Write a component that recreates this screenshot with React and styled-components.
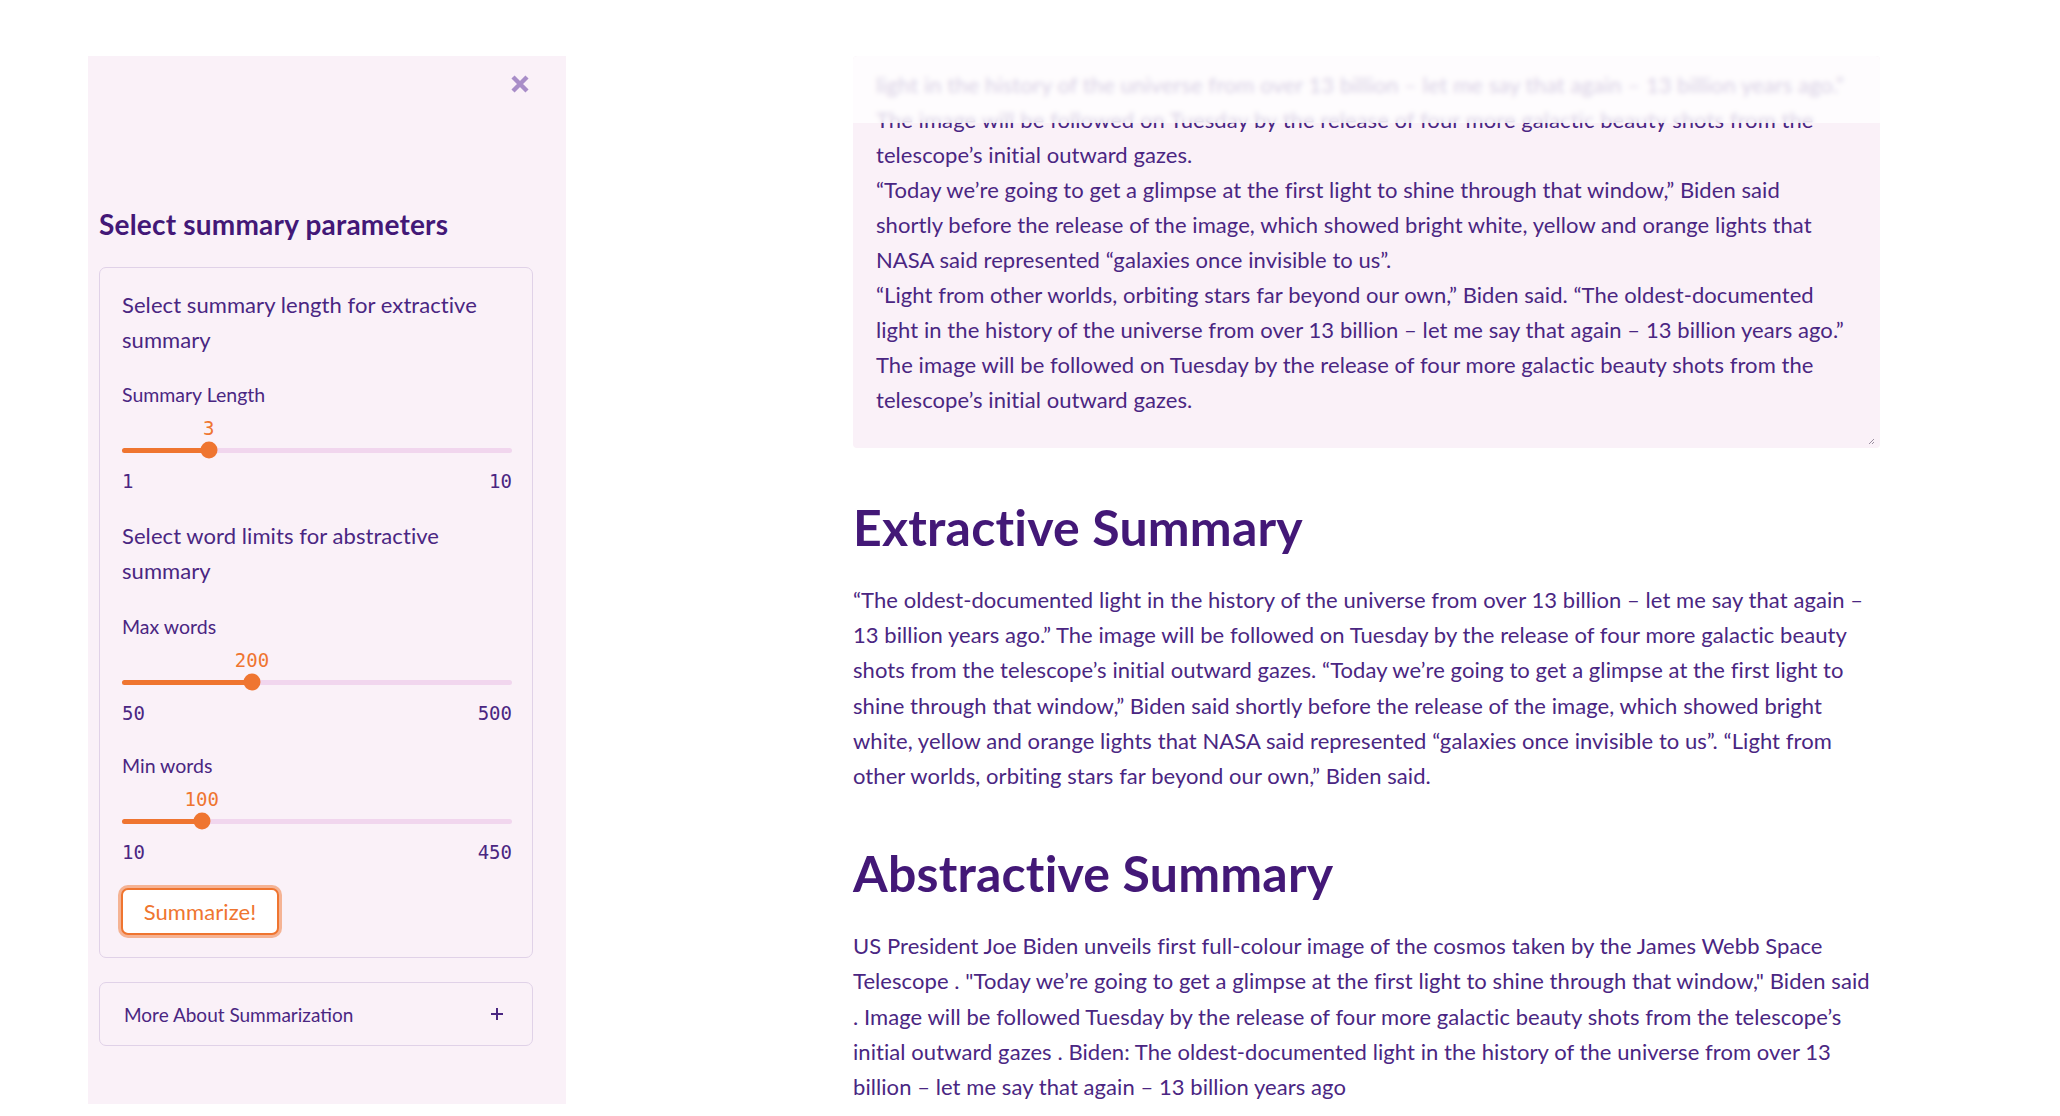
import React from "react";
import styled, { createGlobalStyle } from "styled-components";

const Global = createGlobalStyle`
  html, body { margin: 0; padding: 0; background: #ffffff; }
  body { font-family: Lato, "Noto Sans", sans-serif; }
  * { box-sizing: border-box; }
`;

const PURPLE = "#4a2682";
const HEAD = "#431877";
const ORANGE = "#ef7530";

const Page = styled.div`
  display: flex;
  align-items: flex-start;
  width: 2060px;
  min-height: 1116px;
  padding: 56px 0 0 88px;
`;

const Sidebar = styled.aside`
  width: 478px;
  height: 1048px;
  flex-shrink: 0;
  background: #faf1f8;
  padding: 0 33px 0 11px;
  display: flex;
  flex-direction: column;
`;

const SideHeader = styled.div`
  height: 56px;
  display: flex;
  align-items: center;
  justify-content: flex-end;
  padding-right: 2px;
`;

const CloseButton = styled.button`
  border: none;
  background: transparent;
  padding: 0;
  width: 22px;
  height: 22px;
  display: flex;
  align-items: center;
  justify-content: center;
  cursor: pointer;
`;

const SideTitle = styled.h3`
  margin: 95px 0 25px 0;
  font-size: 28px;
  line-height: 35px;
  font-weight: 700;
  letter-spacing: 0.2px;
  color: ${HEAD};
`;

const Card = styled.div`
  border: 1px solid #e0d2e8;
  border-radius: 7px;
  padding: 20px 20px 22px 22px;
  display: flex;
  flex-direction: column;
`;

const CardText = styled.p`
  margin: ${(p) => p.$mt || 0}px 0 0 0;
  font-size: 22px;
  line-height: 34.5px;
  letter-spacing: 0.07px;
  color: ${PURPLE};
`;

const SliderBlock = styled.div`
  margin-top: ${(p) => p.$mt}px;
  display: flex;
  flex-direction: column;
`;

const SliderLabel = styled.div`
  font-size: 19.5px;
  line-height: 26px;
  color: ${PURPLE};
`;

const ValueRow = styled.div`
  position: relative;
  height: 24px;
  margin-top: 8px;
`;

const ValueText = styled.span`
  position: absolute;
  top: 0;
  transform: translateX(-50%);
  font-family: "DejaVu Sans Mono", "Liberation Mono", monospace;
  font-size: 19px;
  line-height: 24px;
  color: ${ORANGE};
`;

const TrackWrap = styled.div`
  position: relative;
  height: 20px;
  display: flex;
  align-items: center;
`;

const Track = styled.div`
  position: relative;
  width: 100%;
  height: 5px;
  border-radius: 3px;
  background: #f1d6ee;
`;

const Fill = styled.div`
  height: 100%;
  border-radius: 3px;
  background: ${ORANGE};
`;

const Thumb = styled.div`
  position: absolute;
  top: 50%;
  width: 17px;
  height: 17px;
  border-radius: 50%;
  background: ${ORANGE};
  transform: translate(-50%, -50%);
`;

const Ticks = styled.div`
  margin-top: 9px;
  display: flex;
  justify-content: space-between;
  font-family: "DejaVu Sans Mono", "Liberation Mono", monospace;
  font-size: 19px;
  line-height: 24px;
  color: ${PURPLE};
`;

const SummarizeButton = styled.button`
  align-self: flex-start;
  margin: 24px 0 0 -1px;
  width: 158px;
  height: 47px;
  background: #ffffff;
  border: 2px solid ${ORANGE};
  border-radius: 7px;
  box-shadow: 0 0 0 3px rgba(239, 117, 48, 0.5);
  font-family: Lato, "Noto Sans", sans-serif;
  font-size: 22px;
  letter-spacing: 0.1px;
  color: ${ORANGE};
  cursor: pointer;
`;

const Expander = styled.div`
  margin-top: 24px;
  height: 64px;
  border: 1px solid #e0d2e8;
  border-radius: 7px;
  padding: 0 28px 0 24px;
  display: flex;
  align-items: center;
  justify-content: space-between;
  font-size: 19px;
  color: ${PURPLE};
`;

const Main = styled.main`
  width: 1027px;
  margin-left: 287px;
  display: flex;
  flex-direction: column;
`;

const TextArea = styled.div`
  position: relative;
  height: 392px;
  background: #faf1f8;
  border-radius: 4px;
  padding: 11px 23px 30px 23px;
  overflow: hidden;
  font-size: 22px;
  line-height: 35px;
  letter-spacing: 0.07px;
  color: ${PURPLE};
`;

const AreaLine = styled.div`
  white-space: nowrap;
`;

const Fade = styled.div`
  position: absolute;
  left: 0;
  right: 0;
  top: 0;
  height: 67px;
  background: rgba(255, 255, 255, 0.78);
  backdrop-filter: blur(2.5px);
`;

const Grip = styled.svg`
  position: absolute;
  right: 5px;
  bottom: 3px;
`;

const Heading = styled.h2`
  margin: ${(p) => p.$mt}px 0 26px 0;
  font-size: 50px;
  line-height: 58px;
  font-weight: 700;
  color: ${HEAD};
  letter-spacing: 0.2px;
`;

const Para = styled.p`
  margin: 0;
  font-size: 22px;
  line-height: 35.2px;
  letter-spacing: 0.07px;
  color: ${PURPLE};
`;

const AREA_LINES = [
  "light in the history of the universe from over 13 billion – let me say that again – 13 billion years ago.”",
  "The image will be followed on Tuesday by the release of four more galactic beauty shots from the",
  "telescope’s initial outward gazes.",
  "“Today we’re going to get a glimpse at the first light to shine through that window,” Biden said",
  "shortly before the release of the image, which showed bright white, yellow and orange lights that",
  "NASA said represented “galaxies once invisible to us”.",
  "“Light from other worlds, orbiting stars far beyond our own,” Biden said. “The oldest-documented",
  "light in the history of the universe from over 13 billion – let me say that again – 13 billion years ago.”",
  "The image will be followed on Tuesday by the release of four more galactic beauty shots from the",
  "telescope’s initial outward gazes.",
];

function Slider({ label, min, max, value, mt }) {
  const pct = ((value - min) / (max - min)) * 100;
  return (
    <SliderBlock $mt={mt}>
      <SliderLabel>{label}</SliderLabel>
      <ValueRow>
        <ValueText style={{ left: `${pct}%` }}>{value}</ValueText>
      </ValueRow>
      <TrackWrap>
        <Track>
          <Fill style={{ width: `${pct}%` }} />
          <Thumb style={{ left: `${pct}%` }} />
        </Track>
      </TrackWrap>
      <Ticks>
        <span>{min}</span>
        <span>{max}</span>
      </Ticks>
    </SliderBlock>
  );
}

export default function App() {
  return (
    <>
      <Global />
      <Page>
        <Sidebar>
          <SideHeader>
            <CloseButton aria-label="Close">
              <svg width="20" height="20" viewBox="0 0 20 20">
                <path d="M3 3 L17 17 M17 3 L3 17" stroke="#a88dc8" strokeWidth="4.4" strokeLinecap="butt" />
              </svg>
            </CloseButton>
          </SideHeader>
          <SideTitle>Select summary parameters</SideTitle>
          <Card>
            <CardText>Select summary length for extractive summary</CardText>
            <Slider label="Summary Length" min={1} max={10} value={3} mt={25} />
            <CardText $mt={26}>Select word limits for abstractive summary</CardText>
            <Slider label="Max words" min={50} max={500} value={200} mt={26} />
            <Slider label="Min words" min={10} max={450} value={100} mt={28} />
            <SummarizeButton>Summarize!</SummarizeButton>
          </Card>
          <Expander>
            <span>More About Summarization</span>
            <svg width="14" height="14" viewBox="0 0 14 14">
              <path d="M7 1 V13 M1 7 H13" stroke="#4a2682" strokeWidth="2" />
            </svg>
          </Expander>
        </Sidebar>
        <Main>
          <TextArea>
            {AREA_LINES.map((line, i) => (
              <AreaLine key={i}>{line}</AreaLine>
            ))}
            <Fade />
            <Grip width="8" height="8" viewBox="0 0 8 8">
              <path d="M7 2 L2 7 M7 5 L5 7" stroke="#9a8fa0" strokeWidth="1" />
            </Grip>
          </TextArea>
          <Heading $mt={50}>Extractive Summary</Heading>
          <Para>
            “The oldest-documented light in the history of the universe from over 13 billion – let me say that again – 13 billion years ago.” The image will be followed on Tuesday by the release of four more galactic beauty shots from the telescope’s initial outward gazes. “Today we’re going to get a glimpse at the first light to shine through that window,” Biden said shortly before the release of the image, which showed bright white, yellow and orange lights that NASA said represented “galaxies once invisible to us”. “Light from other worlds, orbiting stars far beyond our own,” Biden said.
          </Para>
          <Heading $mt={51}>Abstractive Summary</Heading>
          <Para>
            US President Joe Biden unveils first full-colour image of the cosmos taken by the James Webb Space Telescope . "Today we’re going to get a glimpse at the first light to shine through that window," Biden said . Image will be followed Tuesday by the release of four more galactic beauty shots from the telescope’s initial outward gazes . Biden: The oldest-documented light in the history of the universe from over 13 billion – let me say that again – 13 billion years ago
          </Para>
        </Main>
      </Page>
    </>
  );
}
